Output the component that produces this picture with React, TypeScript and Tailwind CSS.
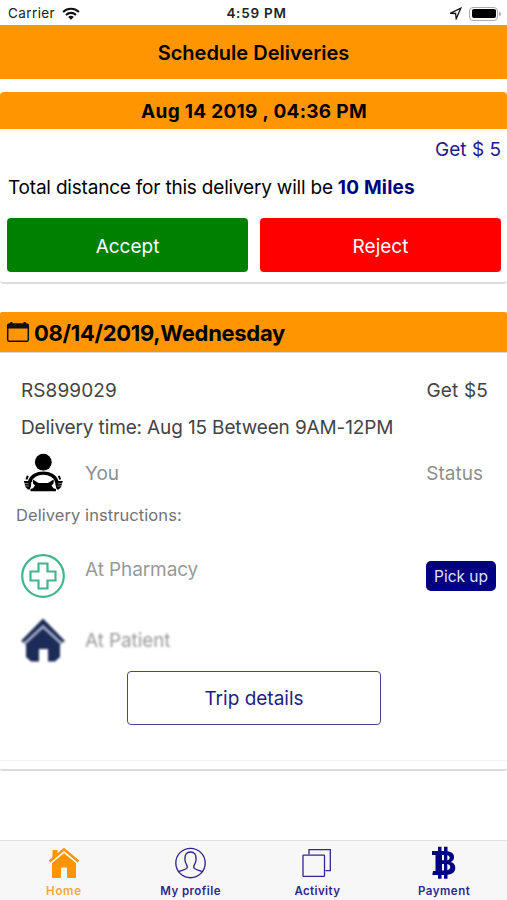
import React from "react";

function WifiIcon() {
  return (
    <svg width="18" height="13" viewBox="0 0 18 13" fill="none" stroke="#111" strokeWidth="2.1">
      <path d="M1.1 4.9C5.5 .7 12.5 .7 16.9 4.9" />
      <path d="M4 7.9c2.9-2.7 7.1-2.7 10 0" />
      <path d="M9 12.7 6.2 9.9c1.6-1.4 4-1.4 5.6 0Z" fill="#111" stroke="none" />
    </svg>
  );
}

function CalendarIcon() {
  return (
    <svg width="24" height="22" viewBox="0 0 24 22" className="shrink-0">
      <rect x="1.7" y="3.2" width="20.6" height="17" rx="1.5" fill="none" stroke="#111" strokeWidth="1.5" />
      <path d="M1.2 4.5Q1.2 2.5 3.2 2.5H4.2V1H6.5V2.5H17.5V1H19.8V2.5H20.8Q22.8 2.5 22.8 4.5V7.5H1.2Z" fill="#111" />
    </svg>
  );
}

function DriverIcon() {
  return (
    <svg width="42" height="40" viewBox="0 0 42 40" className="mb-[3px]">
      <circle cx="20.3" cy="9.2" r="8.4" fill="#000" />
      <path d="M6.800 28.500C9.500 17.300 31.100 17.300 33.800 28.500" fill="none" stroke="#000" strokeWidth="3.400" />
      <path d="M10 26.500 15.500 30H25L30.600 26.500 31 30 28.500 32.500 30.500 35.200 33 36V38.200H7.500V36L10 35.200 12 32.500 9.600 30Z" fill="#000" />
      <path d="M4.800 22.800 3.400 26.500M35.800 22.800l1.400 3.700" stroke="#000" strokeWidth="2" />
      <path d="M.8 28h8l-.6 4.500-1.500 4H5L2.500 34ZM39.800 28h-8l.6 4.500 1.500 4h1.700L38.100 34Z" fill="#000" />
      <path d="M.8 30.300l5 .5M2 32.700l4 .5M39.800 30.300l-5 .5M38.600 32.700l-4 .5" stroke="#fff" strokeWidth=".5" />
      <path d="M9.300 29 8.700 35M31.300 29l.6 6" stroke="#fff" strokeWidth="1.500" />
    </svg>
  );
}

function PharmacyIcon() {
  return (
    <svg width="44" height="44" viewBox="0 0 44 44" fill="none" stroke="#43b58e" strokeWidth="2.2">
      <circle cx="22" cy="22" r="20.8" />
      <path d="M17.5 9.5h9v8h8v9h-8v8h-9v-8h-8v-9h8Z" />
    </svg>
  );
}

function PatientHouseIcon() {
  return (
    <svg width="44" height="44" viewBox="0 0 44 44" className="blur-[0.8px]">
      <path d="M5 20 22 5 39 20V39L34 43.500H27V31H18V43.500H10L5 39Z" fill="#1c2b57" />
      <path d="M3 26 22 8.500 41 26" fill="none" stroke="#a7aec6" strokeWidth="3" />
      <path d="M0 23 22 .5 44 23 41.500 24.500 22 6.500 2.500 24.500Z" fill="#1c2b57" />
    </svg>
  );
}

function HomeIcon() {
  return (
    <svg width="32" height="32" viewBox="0 0 32 32">
      <path d="M4.500 3h5v4.500L4.500 12Z" fill="#ff9500" />
      <path d="M4 16 16 6 28 16V31H19V20.500H13V31H4Z" fill="#ff9500" />
      <path d="M2 17 16 5 30 17" fill="none" stroke="#fff3df" strokeWidth="1.300" />
      <path d="M1.500 14.500 16 2.300 30.500 14.500" fill="none" stroke="#ff9500" strokeWidth="2.500" />
    </svg>
  );
}

function ProfileIcon() {
  return (
    <svg width="32" height="32" viewBox="0 0 32 32" fill="none" stroke="#30278f" strokeWidth="1.35">
      <circle cx="15.5" cy="16" r="14.7" />
      <path d="M3.500 24.7c2.3-1.5 6.5-1.5 8.2-3.3.7-.8.6-2.5-.2-3.8-1.1-1.7-1.5-3.3-1.6-5.1C9.600 7.6 11.600 5 15.500 5s5.9 2.6 5.6 7.5c-.1 1.8-.5 3.4-1.6 5.1-.8 1.3-.9 3-.2 3.8 1.7 1.8 5.9 1.8 8.2 3.3" />
    </svg>
  );
}

function ActivityIcon() {
  return (
    <svg width="32" height="32" viewBox="0 0 32 32" fill="none" stroke="#30278f" strokeWidth="1.3">
      <rect x="2" y="8.2" width="21.5" height="21.2" rx=".6" />
      <path d="M8 7.5V2.6H29.3V23.7H24.5" />
    </svg>
  );
}

function BitcoinIcon() {
  return (
    <svg width="26" height="34" viewBox="0 0 26 34" fill="#000080">
      <path
        fillRule="evenodd"
        d="M7 .8h3.5V5H13V.8h3.5v4.4c4 .5 6.5 2.4 6.5 5.8 0 2.6-1.2 4.1-3.3 5 3 .8 4.6 2.8 4.6 5.8 0 4.3-3 6.6-7.8 7v4H13v-3.9h-2.5v3.9H7v-3.9H1.3l.7-4h2.5V9H1V5h6ZM11 9v5.3H13V9ZM16.3 9.2v5c3.3-.5 3.2-4.6 0-5ZM11 18v6.4H13V18ZM16.3 18.1v6.1c4-.6 3.9-5.5 0-6.1Z"
      />
    </svg>
  );
}

function Tab({ icon, children, className }: { icon: React.ReactNode; children: React.ReactNode; className: string }) {
  return (
    <div className={`flex flex-1 flex-col items-center pl-px pt-[5px] text-[11.5px] font-semibold leading-[14px] ${className}`}>
      <div className="flex h-[34px] items-center">{icon}</div>
      <span className="mt-1 whitespace-nowrap">{children}</span>
    </div>
  );
}

export default function App() {
  return (
    <div className="flex h-[900px] w-[507px] flex-col overflow-hidden whitespace-nowrap bg-white font-['Inter','Liberation_Sans',sans-serif] text-black">
      <div className="grid h-[25px] grid-cols-3 items-center pl-2 pr-[6px] pt-[2px] text-[13.5px] text-[#222]">
        <div className="flex items-center gap-[7px]">
          <span className="tracking-[0.4px]">Carrier</span>
          <WifiIcon />
        </div>
        <span className="pl-[4px] text-center font-semibold tracking-[0.75px]">4:59 PM</span>
        <div className="flex items-center justify-end gap-[7px]">
          <svg width="13" height="13" viewBox="0 0 13 13" fill="none" stroke="#111" strokeWidth="1.3">
            <path d="M1.2 6.3 11.8 1.2 7.2 11.8 6.6 6.5Z" />
          </svg>
          <div className="flex items-center gap-px">
            <div className="h-[14px] w-[29px] rounded-[4px] border border-[#aaa] p-[1.5px]">
              <div className="h-full w-full rounded-[2px] bg-black" />
            </div>
            <div className="h-1 w-[1.5px] rounded-r bg-[#aaa]" />
          </div>
        </div>
      </div>

      <header className="flex h-[54px] items-center justify-center bg-[#ff9500] pt-px text-[20px] font-semibold">
        Schedule Deliveries
      </header>

      <section className="mt-[13px] h-[192px] overflow-hidden rounded-[4px] border-b-2 border-[#dcdcdc]">
        <div className="flex h-[37px] items-center justify-center bg-[#ff9500] pl-px pt-[3px] text-[19px] font-bold tracking-[0.3px]">
          Aug 14 2019 , 04:36 PM
        </div>
        <div className="flex h-[41px] items-center justify-end pr-[6px] pt-[2px] text-[19px] text-[#241a88]">Get $ 5</div>
        <div className="flex h-[36px] items-center pl-2 text-[19px]">
          <span className="tracking-[-0.2px]">Total distance for this delivery will be</span>
          <b className="ml-[5px] font-bold tracking-[0.2px] text-[#000080]">10 Miles</b>
        </div>
        <div className="mt-3 flex gap-3 pl-[7px] pr-[6px] text-[19px] text-white">
          <button className="h-[54px] flex-1 rounded-[4px] bg-[#008000] pt-[4px]">Accept</button>
          <button className="h-[54px] flex-1 rounded-[4px] bg-[#ff0000] pt-[4px]">Reject</button>
        </div>
      </section>

      <section className="mt-[28px] flex h-[459px] flex-col overflow-hidden rounded-[2px] border-b-2 border-[#dcdcdc] text-[19px]">
        <div className="flex h-[41px] shrink-0 items-center gap-1 border-b border-[#d8d8d8] bg-[#ff9500] pl-[6px] text-[22px] font-bold">
          <CalendarIcon />
          <span className="pt-[3px] tracking-[-0.31px]">08/14/2019,Wednesday</span>
        </div>
        <div className="flex h-[74px] items-end justify-between pl-[21px] pr-[19px] text-[#444]">
          <span className="h-[50.5px] tracking-[0.1px]">RS899029</span>
          <span className="h-[50.5px] tracking-[0.15px]">Get $5</span>
        </div>
        <div className="-mt-[13px] pl-[21px] tracking-[-0.14px] text-[#444]">Delivery time: Aug 15 Between 9AM-12PM</div>
        <div className="mt-[11px] flex h-[42px] items-center pl-[23px] text-[#8e8e8e]">
          <DriverIcon />
          <span className="ml-5">You</span>
          <span className="ml-auto pr-6">Status</span>
        </div>
        <div className="mt-[7px] pl-4 text-[16.5px] leading-6 tracking-[0.07px] text-[#737373]">Delivery instructions:</div>
        <div className="mt-[27px] flex h-[44px] items-center pl-[21px] pr-[11px] text-[#999]">
          <PharmacyIcon />
          <span className="mb-[10px] ml-5 tracking-[-0.1px]">At Pharmacy</span>
          <span className="ml-auto flex h-[30px] w-[70px] items-center justify-center rounded-[5px] bg-[#000080] pt-[2px] text-[15.5px] text-[#dfe0ff]">
            Pick up
          </span>
        </div>
        <div className="mt-[20px] flex h-[44px] items-center pl-[21px] text-[#999]">
          <PatientHouseIcon />
          <span className="ml-5 pt-[4px] tracking-[-0.1px] blur-[1px]">At Patient</span>
        </div>
        <button className="ml-[127px] mt-[9px] h-[54px] w-[254px] shrink-0 rounded-[4px] border-[1.5px] border-[#4b439a] pt-[4px] text-[#241a88]">
          Trip details
        </button>
        <div className="mt-[35px] border-t border-[#f4f4f4]" />
      </section>

      <nav className="mt-auto flex h-[60px] border-t border-[#e0e0e0] bg-[#f7f7f8] text-[#30278f]">
        <Tab className="tracking-[0.7px] text-[#f9a53a]" icon={<HomeIcon />}>Home</Tab>
        <Tab className="tracking-[0.45px]" icon={<ProfileIcon />}>My profile</Tab>
        <Tab className="tracking-[0.4px]" icon={<ActivityIcon />}>Activity</Tab>
        <Tab className="tracking-[0.5px]" icon={<BitcoinIcon />}>Payment</Tab>
      </nav>
    </div>
  );
}
